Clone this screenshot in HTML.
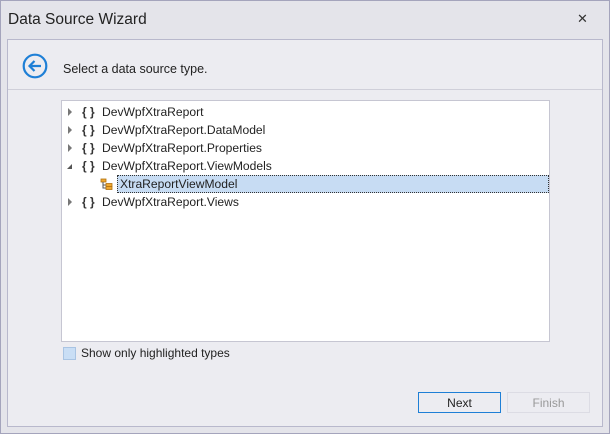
<!DOCTYPE html>
<html><head><style>
*{margin:0;padding:0;box-sizing:border-box}
body{width:610px;height:434px;background:#e4e4ea;font-family:"Segoe UI","Liberation Sans",sans-serif;font-size:12px;color:#222;position:relative;overflow:hidden}
.win{position:absolute;left:0;top:0;width:610px;height:434px;border:1px solid #a4a4bc}
.title{position:absolute;left:8px;top:11px;font-size:15.5px;color:#222}
.close{position:absolute;left:577px;top:11px;font-size:13px;color:#333}
.panel{position:absolute;left:7px;top:39px;width:596px;height:388px;border:1px solid #b8b8cc;background:#ececf1}
.hdr{position:absolute;left:0;top:0;width:594px;height:50px;border-bottom:1px solid #cfcfd9}
.hdrtxt{position:absolute;left:55px;top:21px;font-size:12.5px}
.tree{position:absolute;left:53px;top:60px;width:489px;height:242px;background:#fff;border:1px solid #c6c6d2}
.row{position:absolute;left:0;height:18px;line-height:18px;white-space:nowrap}
.arr{position:absolute;left:6px;top:5px;width:0;height:0;border-left:4px solid #777;border-top:4px solid transparent;border-bottom:4px solid transparent}
.arrd{position:absolute;left:5px;top:7px;width:0;height:0;border-right:5px solid #555;border-top:5px solid transparent}
.br{position:absolute;left:20px;font-weight:bold;font-size:12px;color:#333}
.lbl{position:absolute;left:40px;font-size:12.1px}
.sel{position:absolute;left:55px;top:0;width:432px;height:18px;background:#c7dcf3;border:1px dotted #333}
.chk{position:absolute;left:55px;top:307px;width:13px;height:13px;background:#c9def5;border:1px solid #a9c4e3}
.chkt{position:absolute;left:73px;top:306px;font-size:12px}
.btn{position:absolute;top:352px;width:83px;height:22px;text-align:center;line-height:20px;font-size:12px}
</style></head><body>
<div class="win"></div>
<div class="title">Data Source Wizard</div>
<div class="close">✕</div>
<div class="panel">
 <div class="hdr">
  <svg style="position:absolute;left:14px;top:13px" width="26" height="26" viewBox="0 0 26 26"><circle cx="13" cy="13" r="11.3" fill="none" stroke="#1e7fd6" stroke-width="2.2"/><path d="M19 13H7.5M12.5 8L7.5 13L12.5 18" fill="none" stroke="#1e7fd6" stroke-width="2.2"/></svg>
  <div class="hdrtxt" style="top:22px">Select a data source type.</div>
 </div>
 <div class="tree">
  <div class="row" style="top:2px"><div class="arr"></div><span class="br">{ }</span><span class="lbl">DevWpfXtraReport</span></div>
  <div class="row" style="top:20px"><div class="arr"></div><span class="br">{ }</span><span class="lbl">DevWpfXtraReport.DataModel</span></div>
  <div class="row" style="top:38px"><div class="arr"></div><span class="br">{ }</span><span class="lbl">DevWpfXtraReport.Properties</span></div>
  <div class="row" style="top:56px"><div class="arrd"></div><span class="br">{ }</span><span class="lbl">DevWpfXtraReport.ViewModels</span></div>
  <div class="row" style="top:74px;width:489px">
   <svg style="position:absolute;left:38px;top:3px" width="13" height="13" viewBox="0 0 13 13"><rect x="1" y="1" width="5" height="3" fill="#f0a830" stroke="#b07010" stroke-width=".8"/><path d="M3 4V10H6M3 7H6" stroke="#555" fill="none"/><rect x="6" y="5.5" width="6" height="3" fill="#f0a830" stroke="#b07010" stroke-width=".8"/><rect x="6" y="8.5" width="6" height="3" fill="#f0a830" stroke="#b07010" stroke-width=".8"/></svg>
   <div class="sel"></div><span class="lbl" style="left:58px">XtraReportViewModel</span></div>
  <div class="row" style="top:92px"><div class="arr"></div><span class="br">{ }</span><span class="lbl">DevWpfXtraReport.Views</span></div>
 </div>
 <div class="chk"></div><div class="chkt">Show only highlighted types</div>
 <div class="btn" style="left:410px;border:1px solid #1e7fd6;background:#ececf1;height:21px">Next</div>
 <div class="btn" style="left:499px;border:1px solid #dcdce4;color:#999;height:21px">Finish</div>
</div>
</body></html>
